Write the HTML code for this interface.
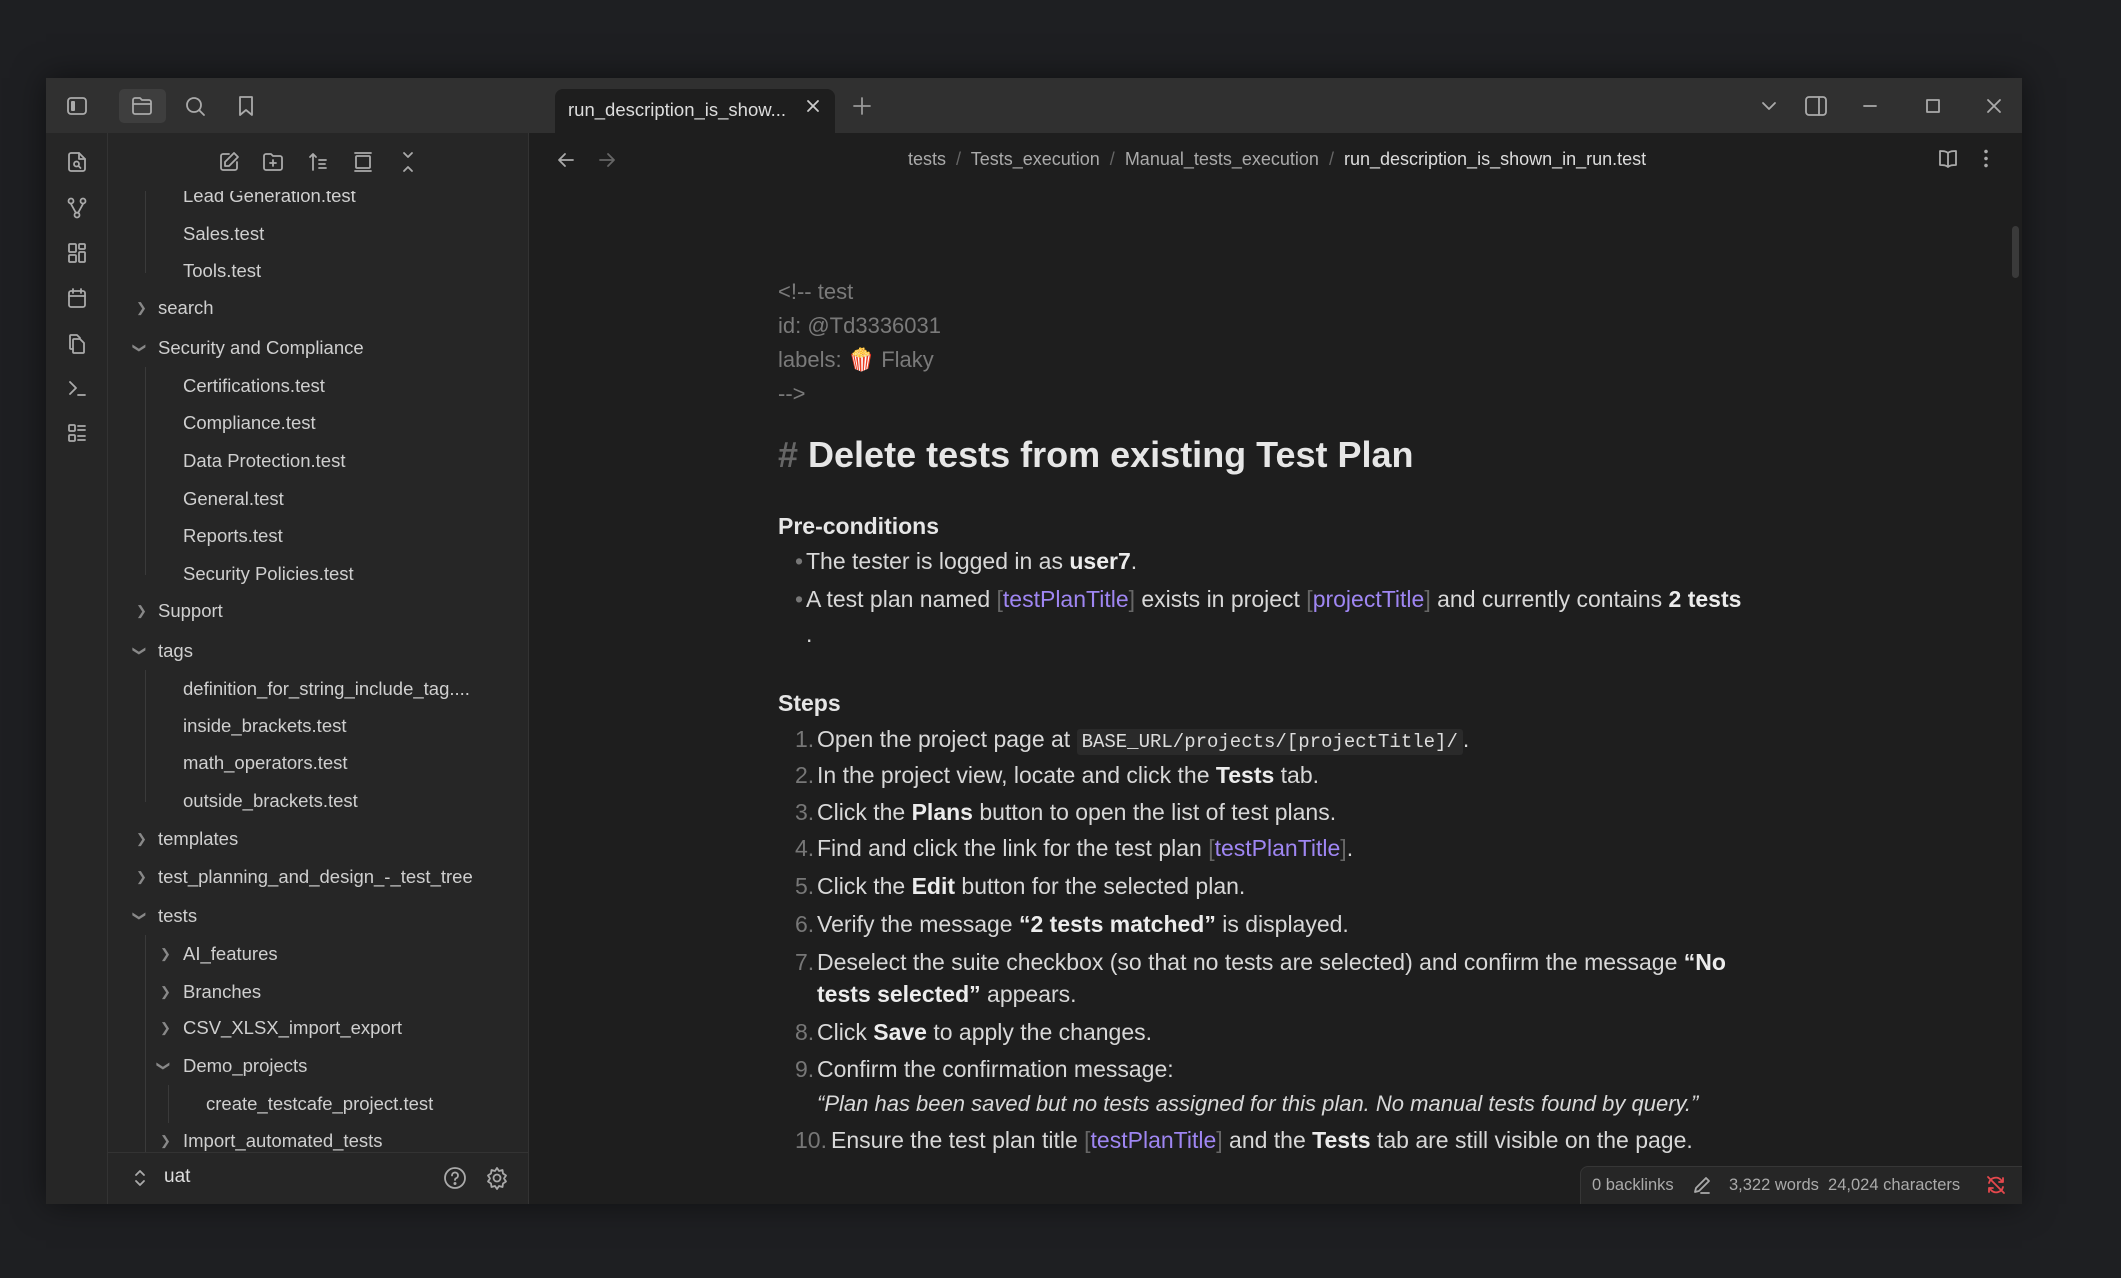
<!DOCTYPE html>
<html><head><meta charset="utf-8">
<style>
*{margin:0;padding:0;box-sizing:border-box}
body{width:2121px;height:1278px;background:#1e1f22;font-family:"Liberation Sans",sans-serif;position:relative;overflow:hidden;color:#dadada}
.win{position:absolute;left:46px;top:78px;width:1976px;height:1126px;background:#1e1e1e;overflow:hidden;box-shadow:0 0 30px rgba(0,0,0,.5)}
.tb{position:absolute;left:0;top:0;width:1976px;height:55px;background:#303030}
.rib{position:absolute;left:0;top:55px;width:62px;height:1071px;background:#262626;border-right:1px solid #333}
.side{position:absolute;left:62px;top:55px;width:421px;height:1071px;background:#262626;border-right:1px solid #333;overflow:hidden}
.a{position:absolute;white-space:nowrap}
svg{position:absolute;fill:none;stroke:#aaa;stroke-width:1.8;stroke-linecap:round;stroke-linejoin:round}
.si{font-size:18.5px;color:#cfcfcf;line-height:38px;height:38px}
.chev{font-size:13px;color:#888}
.c{font-size:22px;color:#7a7a7a;line-height:34px}
.t{font-size:23px;color:#d8d8d8;line-height:36px}
.t b{color:#ececec}
.l{color:#9f86f2}
.br{color:#666}
.n{color:#777}
code{font-family:"Liberation Mono",monospace;font-size:19px;background:#2a2a2a;padding:2px 5px;border-radius:3px;color:#ddd}
.g{position:absolute;width:1px;background:#3a3a3a}
</style></head><body>
<div class="win">
 <div class="tb"></div>
 <svg style="left:19px;top:16px" width="24" height="24" viewBox="0 0 24 24"><rect x="3" y="4" width="18" height="16" rx="3"/><rect x="6" y="7" width="4" height="10" rx="1" fill="#aaa" stroke="none"/></svg>
 <div class="a" style="left:73px;top:11px;width:47px;height:34px;background:#3e3e3e;border-radius:5px"></div>
 <svg style="left:84px;top:16px" width="24" height="24" viewBox="0 0 24 24"><path d="M3 6a2 2 0 0 1 2-2h5l2 2h7a2 2 0 0 1 2 2v10a2 2 0 0 1-2 2H5a2 2 0 0 1-2-2z"/><path d="M3 10h18"/></svg>
 <svg style="left:137px;top:16px" width="24" height="24" viewBox="0 0 24 24"><circle cx="11" cy="11" r="7"/><path d="M16 16l5 5"/></svg>
 <svg style="left:188px;top:16px" width="24" height="24" viewBox="0 0 24 24"><path d="M6 3h12v18l-6-5-6 5z"/></svg>
 <div class="a" style="left:509px;top:11px;width:280px;height:44px;background:#1e1e1e;border-radius:8px 8px 0 0"></div>
 <div class="a" style="left:522px;top:15px;font-size:18.5px;color:#ddd;line-height:34px">run_description_is_show...</div>
 <svg style="left:758px;top:19px" width="18" height="18" viewBox="0 0 18 18"><path d="M4 4l10 10M14 4L4 14" stroke="#ccc"/></svg>
 <svg style="left:805px;top:17px" width="22" height="22" viewBox="0 0 22 22"><path d="M11 3v16M3 11h16" stroke="#999"/></svg>
 <svg style="left:1713px;top:18px" width="20" height="20" viewBox="0 0 20 20"><path d="M4 7l6 6 6-6"/></svg>
 <svg style="left:1757px;top:15px" width="26" height="26" viewBox="0 0 26 26"><rect x="3" y="4" width="20" height="18" rx="3"/><path d="M16 4v18"/></svg>
 <svg style="left:1813px;top:17px" width="22" height="22" viewBox="0 0 22 22"><path d="M5 11h12"/></svg>
 <svg style="left:1876px;top:17px" width="22" height="22" viewBox="0 0 22 22"><rect x="5" y="5" width="12" height="12"/></svg>
 <svg style="left:1937px;top:17px" width="22" height="22" viewBox="0 0 22 22"><path d="M5 5l12 12M17 5L5 17"/></svg>

 <div class="rib"></div>
 <svg style="left:19px;top:72px" width="24" height="24" viewBox="0 0 24 24"><path d="M14 3H6a2 2 0 0 0-2 2v14a2 2 0 0 0 2 2h12a2 2 0 0 0 2-2V9z"/><path d="M14 3v6h6"/><circle cx="11.5" cy="14" r="2.5"/><path d="M13.5 16l2 2"/></svg>
 <svg style="left:19px;top:118px" width="24" height="24" viewBox="0 0 24 24"><circle cx="6" cy="5" r="2.5"/><circle cx="18" cy="5" r="2.5"/><circle cx="12" cy="19" r="2.5"/><path d="M6 8l5 9M18 8l-5 9"/></svg>
 <svg style="left:19px;top:163px" width="24" height="24" viewBox="0 0 24 24"><rect x="4" y="3" width="7" height="8" rx="1"/><rect x="14" y="3" width="6" height="5" rx="1"/><rect x="4" y="14" width="7" height="7" rx="1"/><rect x="14" y="11" width="6" height="10" rx="1"/></svg>
 <svg style="left:19px;top:208px" width="24" height="24" viewBox="0 0 24 24"><rect x="4" y="5" width="16" height="16" rx="2"/><path d="M4 10h16M8 3v4M16 3v4"/></svg>
 <svg style="left:19px;top:254px" width="24" height="24" viewBox="0 0 24 24"><path d="M9 7h6l4 4v9a1 1 0 0 1-1 1H9a1 1 0 0 1-1-1V8a1 1 0 0 1 1-1z"/><path d="M8 17H6a1 1 0 0 1-1-1V4a1 1 0 0 1 1-1h6l3 3"/></svg>
 <svg style="left:19px;top:298px" width="24" height="24" viewBox="0 0 24 24"><path d="M5 6l6 6-6 6M13 19h7"/></svg>
 <svg style="left:19px;top:343px" width="24" height="24" viewBox="0 0 24 24"><rect x="4" y="4" width="6" height="6" rx="1"/><rect x="4" y="14" width="6" height="6" rx="1"/><path d="M13 5h7M13 9h7M13 15h7M13 19h7"/></svg>

 <div class="side">
  <div class="g" style="left:37px;top:25px;height:115px"></div>
  <div class="g" style="left:37px;top:234px;height:208px"></div>
  <div class="g" style="left:37px;top:537px;height:132px"></div>
  <div class="g" style="left:37px;top:802px;height:220px"></div>
  <div class="g" style="left:60px;top:952px;height:38px"></div>
  <div class="a" style="left:458px;top:563px;width:6px;height:190px;background:#3c3c3c;border-radius:3px"></div>
 </div>
 <!-- sidebar items -->
 <div class="a si" style="left:137px;top:99px">Lead Generation.test</div>
 <div class="a si" style="left:137px;top:137px">Sales.test</div>
 <div class="a si" style="left:137px;top:174px">Tools.test</div>
 <div class="a chev" style="left:90px;top:222px">&#x276F;</div><div class="a si" style="left:112px;top:211px">search</div>
 <div class="a chev" style="left:88px;top:262px;transform:rotate(90deg)">&#x276F;</div><div class="a si" style="left:112px;top:251px">Security and Compliance</div>
 <div class="a si" style="left:137px;top:289px">Certifications.test</div>
 <div class="a si" style="left:137px;top:326px">Compliance.test</div>
 <div class="a si" style="left:137px;top:364px">Data Protection.test</div>
 <div class="a si" style="left:137px;top:402px">General.test</div>
 <div class="a si" style="left:137px;top:439px">Reports.test</div>
 <div class="a si" style="left:137px;top:477px">Security Policies.test</div>
 <div class="a chev" style="left:90px;top:525px">&#x276F;</div><div class="a si" style="left:112px;top:514px">Support</div>
 <div class="a chev" style="left:88px;top:565px;transform:rotate(90deg)">&#x276F;</div><div class="a si" style="left:112px;top:554px">tags</div>
 <div class="a si" style="left:137px;top:592px">definition_for_string_include_tag....</div>
 <div class="a si" style="left:137px;top:629px">inside_brackets.test</div>
 <div class="a si" style="left:137px;top:666px">math_operators.test</div>
 <div class="a si" style="left:137px;top:704px">outside_brackets.test</div>
 <div class="a chev" style="left:90px;top:753px">&#x276F;</div><div class="a si" style="left:112px;top:742px">templates</div>
 <div class="a chev" style="left:90px;top:791px">&#x276F;</div><div class="a si" style="left:112px;top:780px">test_planning_and_design_-_test_tree</div>
 <div class="a chev" style="left:88px;top:830px;transform:rotate(90deg)">&#x276F;</div><div class="a si" style="left:112px;top:819px">tests</div>
 <div class="a chev" style="left:114px;top:868px">&#x276F;</div><div class="a si" style="left:137px;top:857px">AI_features</div>
 <div class="a chev" style="left:114px;top:906px">&#x276F;</div><div class="a si" style="left:137px;top:895px">Branches</div>
 <div class="a chev" style="left:114px;top:942px">&#x276F;</div><div class="a si" style="left:137px;top:931px">CSV_XLSX_import_export</div>
 <div class="a chev" style="left:112px;top:980px;transform:rotate(90deg)">&#x276F;</div><div class="a si" style="left:137px;top:969px">Demo_projects</div>
 <div class="a si" style="left:160px;top:1007px">create_testcafe_project.test</div>
 <div class="a chev" style="left:114px;top:1055px">&#x276F;</div><div class="a si" style="left:137px;top:1044px">Import_automated_tests</div>
 <!-- sidebar toolbar overlay -->
 <div class="a" style="left:62px;top:55px;width:420px;height:58px;background:#262626"></div>
 <svg style="left:171px;top:72px" width="24" height="24" viewBox="0 0 24 24"><path d="M12 4H6a2 2 0 0 0-2 2v12a2 2 0 0 0 2 2h12a2 2 0 0 0 2-2v-6"/><path d="M17 3l4 4-9 9H8v-4z"/></svg>
 <svg style="left:215px;top:72px" width="24" height="24" viewBox="0 0 24 24"><path d="M3 6a2 2 0 0 1 2-2h5l2 2h7a2 2 0 0 1 2 2v10a2 2 0 0 1-2 2H5a2 2 0 0 1-2-2z"/><path d="M12 10v6M9 13h6"/></svg>
 <svg style="left:260px;top:72px" width="24" height="24" viewBox="0 0 24 24"><path d="M7 20V4M4 7l3-3 3 3M13 10h7M13 14h6M13 18h7"/></svg>
 <svg style="left:305px;top:72px" width="24" height="24" viewBox="0 0 24 24"><rect x="5" y="6" width="14" height="12" rx="1"/><path d="M4 3h16M4 21h16"/></svg>
 <svg style="left:350px;top:72px" width="24" height="24" viewBox="0 0 24 24"><path d="M8 3l4 4 4-4M8 21l4-4 4 4"/></svg>

 <div class="a" style="left:62px;top:1074px;width:421px;height:52px;background:#262626;border-top:1px solid #333;border-right:1px solid #333"></div>
 <svg style="left:85px;top:1090px" width="18" height="20" viewBox="0 0 18 20"><path d="M5 7l4-4 4 4M5 13l4 4 4-4"/></svg>
 <div class="a" style="left:118px;top:1083px;font-size:19px;color:#ddd;line-height:32px">uat</div>
 <svg style="left:396px;top:1087px" width="26" height="26" viewBox="0 0 26 26"><circle cx="13" cy="13" r="10"/><path d="M10 10.5a3 3 0 1 1 4 2.8c-.8.4-1 1-1 1.7"/><circle cx="13" cy="18.5" r=".6" fill="#aaa"/></svg>
 <svg style="left:438px;top:1087px" width="26" height="26" viewBox="0 0 26 26"><circle cx="13" cy="13" r="3.5"/><path d="M13 3l2 3 3.5-1 .5 3.5 3 2-2 3 2 3-3 2-.5 3.5-3.5-1-2 3-2-3-3.5 1-.5-3.5-3-2 2-3-2-3 3-2 .5-3.5 3.5 1z"/></svg>

 <!-- editor header -->
 <svg style="left:509px;top:71px" width="22" height="22" viewBox="0 0 22 22"><path d="M18 11H4M10 5l-6 6 6 6"/></svg>
 <svg style="left:550px;top:71px" width="22" height="22" viewBox="0 0 22 22"><path d="M4 11h14M12 5l6 6-6 6" stroke="#666"/></svg>
 <div class="a" style="left:862px;top:66px;font-size:18px;line-height:30px;color:#aaa">tests <span style="color:#666">&nbsp;/&nbsp;</span> Tests_execution <span style="color:#666">&nbsp;/&nbsp;</span> Manual_tests_execution <span style="color:#666">&nbsp;/&nbsp;</span> <span style="color:#ddd">run_description_is_shown_in_run.test</span></div>
 <svg style="left:1890px;top:69px" width="24" height="24" viewBox="0 0 24 24"><path d="M12 6c-2-2-5-2-8-2v14c3 0 6 0 8 2 2-2 5-2 8-2V4c-3 0-6 0-8 2zM12 6v14"/></svg>
 <div class="a" style="left:1938px;top:70px;width:4px;height:20px;background:radial-gradient(circle,#aaa 1.6px,transparent 2px) 0 0/4px 7px"></div>
 <div class="a" style="left:1966px;top:148px;width:7px;height:52px;background:#3a3a3a;border-radius:4px"></div>

 <!-- content -->
 <div class="a c" style="left:732px;top:197px">&lt;!-- test</div>
 <div class="a c" style="left:732px;top:231px">id: @Td3336031</div>
 <div class="a c" style="left:732px;top:265px">labels: 🍿 Flaky</div>
 <div class="a c" style="left:732px;top:299px">--&gt;</div>
 <div class="a" style="left:732px;top:355px;font-size:36px;font-weight:bold;line-height:44px;color:#e6e6e6"><span style="color:#666">#</span> Delete tests from existing Test Plan</div>
 <div class="a t" style="left:732px;top:430px;font-weight:bold;color:#e6e6e6">Pre-conditions</div>
 <div class="a t" style="left:749px;top:465px"><span class="n">•</span></div><div class="a t" style="left:760px;top:465px">The tester is logged in as <b>user7</b>.</div>
 <div class="a t" style="left:749px;top:503px"><span class="n">•</span></div><div class="a t" style="left:760px;top:503px">A test plan named <span class="br">[</span><span class="l">testPlanTitle</span><span class="br">]</span> exists in project <span class="br">[</span><span class="l">projectTitle</span><span class="br">]</span> and currently contains <b>2 tests</b></div>
 <div class="a t" style="left:760px;top:538px">.</div>
 <div class="a t" style="left:732px;top:607px;font-weight:bold;color:#e6e6e6">Steps</div>
 <div class="a t" style="left:749px;top:643px"><span class="n">1.</span></div><div class="a t" style="left:771px;top:643px">Open the project page at <code>BASE_URL/projects/[projectTitle]/</code>.</div>
 <div class="a t" style="left:749px;top:679px"><span class="n">2.</span></div><div class="a t" style="left:771px;top:679px">In the project view, locate and click the <b>Tests</b> tab.</div>
 <div class="a t" style="left:749px;top:716px"><span class="n">3.</span></div><div class="a t" style="left:771px;top:716px">Click the <b>Plans</b> button to open the list of test plans.</div>
 <div class="a t" style="left:749px;top:752px"><span class="n">4.</span></div><div class="a t" style="left:771px;top:752px">Find and click the link for the test plan <span class="br">[</span><span class="l">testPlanTitle</span><span class="br">]</span>.</div>
 <div class="a t" style="left:749px;top:790px"><span class="n">5.</span></div><div class="a t" style="left:771px;top:790px">Click the <b>Edit</b> button for the selected plan.</div>
 <div class="a t" style="left:749px;top:828px"><span class="n">6.</span></div><div class="a t" style="left:771px;top:828px">Verify the message <b>“2 tests matched”</b> is displayed.</div>
 <div class="a t" style="left:749px;top:866px"><span class="n">7.</span></div><div class="a t" style="left:771px;top:866px">Deselect the suite checkbox (so that no tests are selected) and confirm the message <b>“No</b></div>
 <div class="a t" style="left:771px;top:898px"><b>tests selected”</b> appears.</div>
 <div class="a t" style="left:749px;top:936px"><span class="n">8.</span></div><div class="a t" style="left:771px;top:936px">Click <b>Save</b> to apply the changes.</div>
 <div class="a t" style="left:749px;top:973px"><span class="n">9.</span></div><div class="a t" style="left:771px;top:973px">Confirm the confirmation message:</div>
 <div class="a t" style="left:771px;top:1008px;font-style:italic;font-size:22px">“Plan has been saved but no tests assigned for this plan. No manual tests found by query.”</div>
 <div class="a t" style="left:749px;top:1044px"><span class="n">10.</span></div><div class="a t" style="left:785px;top:1044px">Ensure the test plan title <span class="br">[</span><span class="l">testPlanTitle</span><span class="br">]</span> and the <b>Tests</b> tab are still visible on the page.</div>

 <!-- status bar -->
 <div class="a" style="left:1534px;top:1088px;width:450px;height:40px;background:#262626;border:1px solid #363636;border-radius:8px 0 0 0"></div>
 <div class="a" style="left:1546px;top:1090px;font-size:16.5px;color:#aaa;line-height:34px">0 backlinks</div>
 <svg style="left:1645px;top:1096px" width="22" height="22" viewBox="0 0 22 22"><path d="M4 18l1-4 10-10 3 3-10 10zM10 19h8"/></svg>
 <div class="a" style="left:1683px;top:1090px;font-size:16.5px;color:#aaa;line-height:34px">3,322 words &nbsp;24,024 characters</div>
 <svg style="left:1939px;top:1096px" width="22" height="22" viewBox="0 0 22 22"><path d="M4 9a7 7 0 0 1 12-3l2 2M18 4v4h-4M18 13a7 7 0 0 1-12 3l-2-2M4 18v-4h4M3 3l16 16" stroke="#e5484d"/></svg>
</div>
</body></html>
